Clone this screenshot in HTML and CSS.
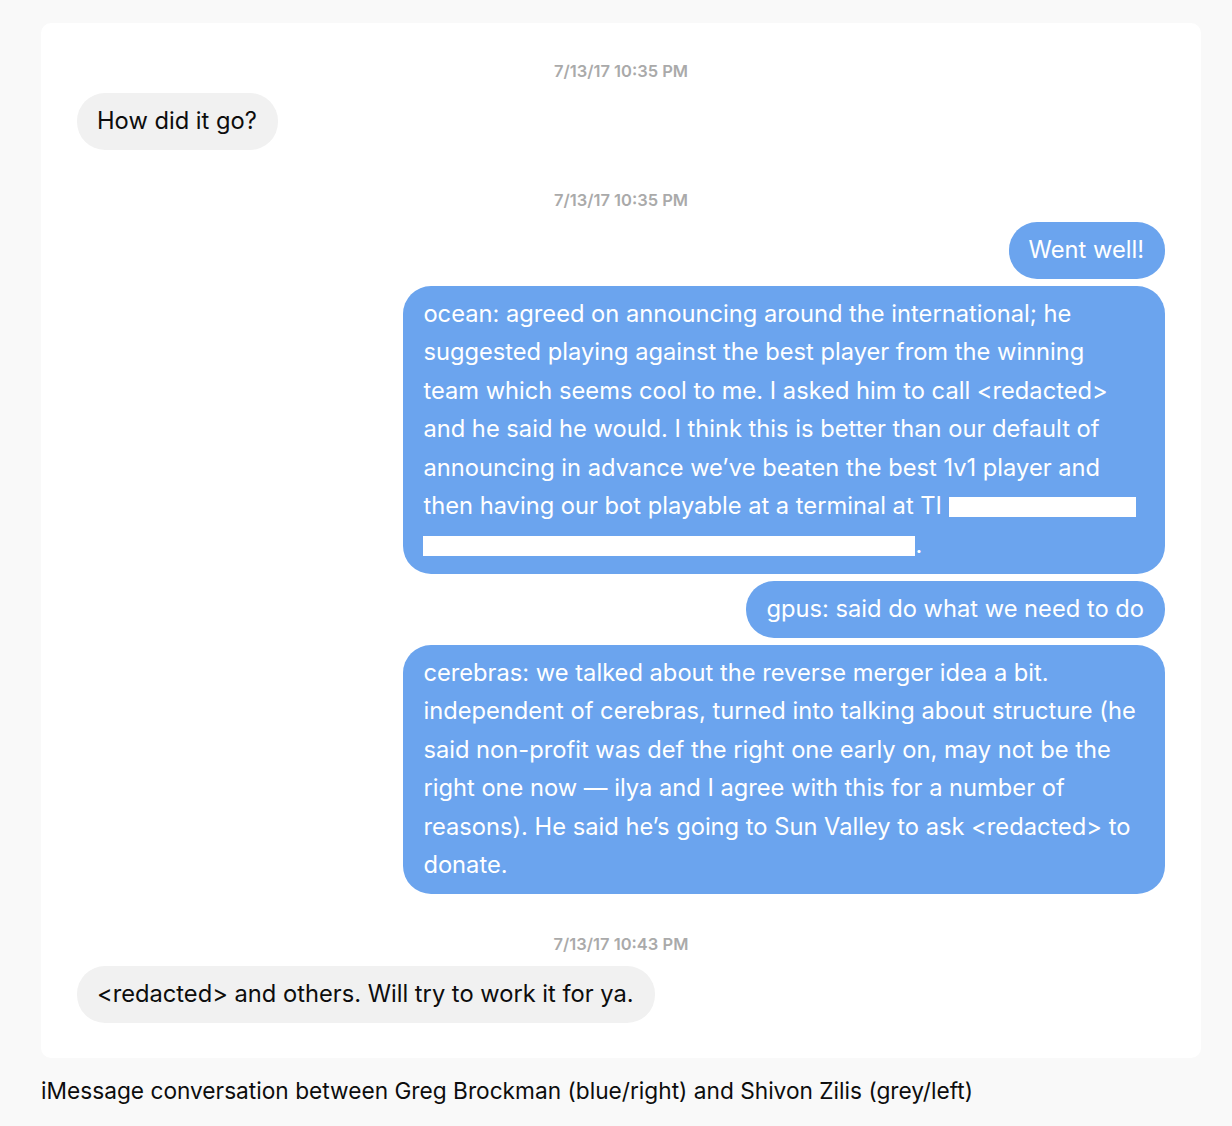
FILE: index.html
```html
<!DOCTYPE html>
<html lang="en">
<head>
    <meta charset="UTF-8">
    <meta name="viewport" content="width=device-width, initial-scale=1.0">
    <title>iMessage conversation</title>
    <link rel="stylesheet" href="styles.css">
</head>
<body>
    <div class="figure">
        <div class="chat">
            <div class="stamp">7/13/17 10:35 PM</div>
            <div class="bubble them">How did it go?</div>

            <div class="stamp">7/13/17 10:35 PM</div>
            <div class="bubble me">Went well!</div>
            <div class="bubble me">ocean: agreed on announcing around the international; he suggested playing against the best player from the winning team which seems cool to me. I asked him to call &lt;redacted&gt; and he said he would. I think this is better than our default of announcing in advance we’ve beaten the best 1v1 player and then having our bot playable at a terminal at TI <span class="blackout short"></span> <span class="blackout long"></span>.</div>
            <div class="bubble me">gpus: said do what we need to do</div>
            <div class="bubble me">cerebras: we talked about the reverse merger idea a bit. independent of cerebras, turned into talking about structure (he said non-profit was def the right one early on, may not be the right one now — ilya and I agree with this for a number of reasons). He said he’s going to Sun Valley to ask &lt;redacted&gt; to donate.</div>

            <div class="stamp">7/13/17 10:43 PM</div>
            <div class="bubble them">&lt;redacted&gt; and others. Will try to work it for ya.</div>
        </div>
        <p class="caption">iMessage conversation between Greg Brockman (blue/right) and Shivon Zilis (grey/left)</p>
    </div>
</body>
</html>
```
FILE: styles.css
```css
body {
    font-family: 'Inter', 'Liberation Sans', sans-serif;
    background-color: #f9f9f9;
    color: #0d0d0d;
    margin: 0;
    padding: 23px 31px 0 41px;
}
.chat {
    background-color: #fff;
    border-radius: 10px;
    padding: 36px 36px 35px;
    display: flex;
    flex-direction: column;
}
.stamp {
    align-self: center;
    font-size: 16.5px;
    font-weight: 600;
    color: #aaaaaa;
    line-height: 20px;
    margin: 2px 0 12px;
}
.bubble + .stamp {
    margin-top: 40px;
}
.bubble {
    font-size: 23.7px;
    line-height: 38.5px;
    padding: 9.2px 21px 9.2px 20px;
    border-radius: 28px;
    max-width: 70%;
    box-sizing: border-box;
}
.bubble + .bubble {
    margin-top: 7px;
}
.them {
    align-self: flex-start;
    background-color: #f1f1f1;
}
.me {
    align-self: flex-end;
    background-color: #6ba4ee;
    color: #fff;
}
.blackout {
    display: inline-block;
    height: 20px;
    background-color: #fff;
    vertical-align: -3px;
}
.short {
    width: 187px;
}
.long {
    width: 492px;
}
.caption {
    font-size: 22.7px;
    margin: 20px 0 0;
    line-height: 26px;
}
```
